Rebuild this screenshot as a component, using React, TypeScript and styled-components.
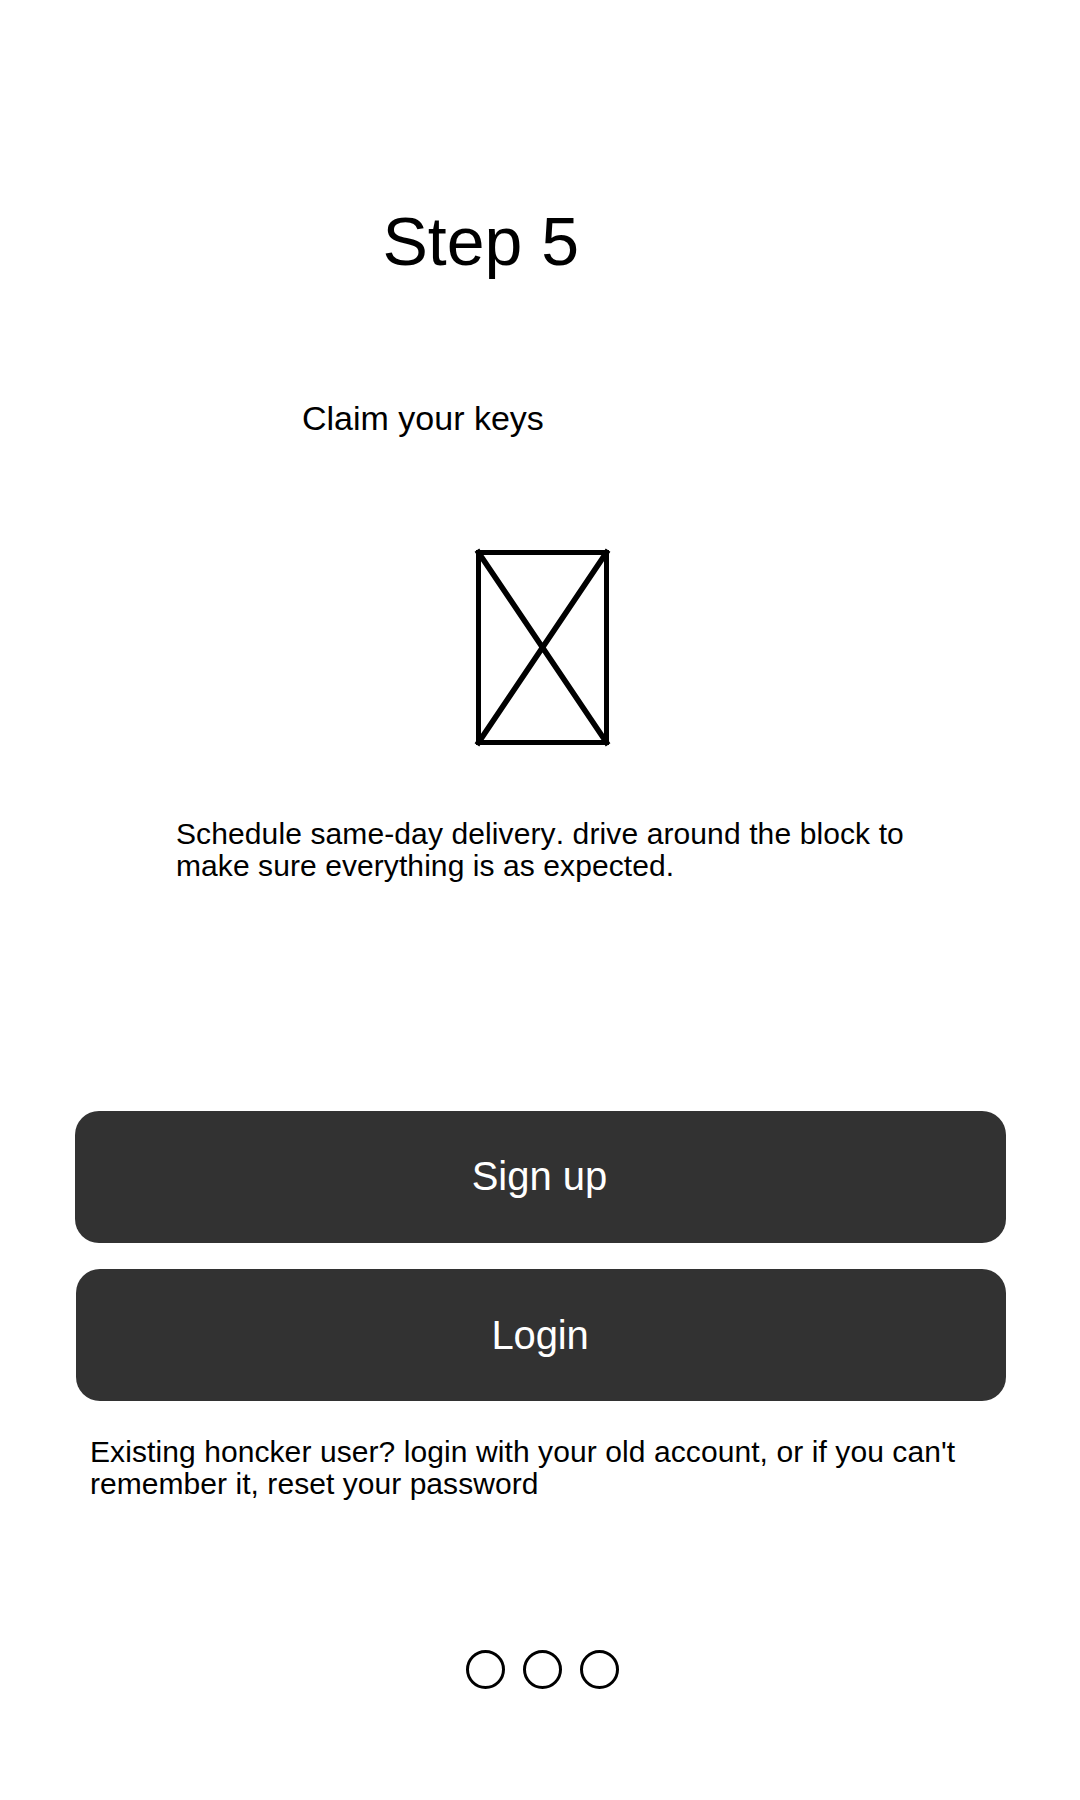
import React from "react";
import styled, { createGlobalStyle } from "styled-components";

const GlobalStyle = createGlobalStyle`
  body {
    margin: 0;
    background: #ffffff;
    color: #000000;
    font-family: "Liberation Sans", Arial, Helvetica, sans-serif;
    font-kerning: none;
  }
`;

const Screen = styled.main`
  box-sizing: border-box;
  display: flex;
  flex-direction: column;
  width: 1080px;
  height: 1800px;
  padding-top: 202px;
  overflow: hidden;
`;

const Title = styled.h1`
  margin: 0 0 0 382.5px;
  font-size: 68px;
  font-weight: 400;
  line-height: 78px;
`;

const Subtitle = styled.h2`
  margin: 119px 0 0 302px;
  font-size: 34px;
  font-weight: 400;
  line-height: 38px;
`;

const Placeholder = styled.svg`
  flex: none;
  width: 139px;
  height: 201px;
  margin: 110px 0 0 473px;
`;

const Copy = styled.p<{ $top: number; $left: number }>`
  margin: ${(p) => p.$top}px 0 0 ${(p) => p.$left}px;
  font-size: 30px;
  line-height: 32px;
  white-space: nowrap;
`;

const Line = styled.span<{ $spacing: number }>`
  display: block;
  letter-spacing: ${(p) => p.$spacing}px;
`;

const Actions = styled.div`
  display: flex;
  flex-direction: column;
  align-items: flex-end;
  gap: 26px;
  margin: 229px 74px 0 75px;
`;

const Button = styled.button<{ $width: number; $lift?: number; $spacing?: number }>`
  width: ${(p) => p.$width}px;
  height: 132px;
  padding: 0 2px ${(p) => p.$lift ?? 0}px 0;
  border: 0;
  border-radius: 24px;
  background: #323232;
  color: #ffffff;
  font: 400 40px/46px "Liberation Sans", Arial, Helvetica, sans-serif;
  letter-spacing: ${(p) => p.$spacing ?? 0}px;
`;

const Pager = styled.nav`
  display: flex;
  gap: 18px;
  margin: 150px 0 0 466px;
`;

const Dot = styled.span`
  box-sizing: border-box;
  width: 39px;
  height: 39px;
  border: 3px solid #000000;
  border-radius: 50%;
`;

export default function App() {
  return (
    <>
      <GlobalStyle />
      <Screen>
        <Title>Step 5</Title>
        <Subtitle>Claim your keys</Subtitle>
        <Placeholder viewBox="0 0 139 201" fill="none" stroke="#000" strokeWidth="5">
          <rect x="5.5" y="5.5" width="128" height="190" />
          <path d="M5.5 5.5 133.5 195.5M133.5 5.5 5.5 195.5" strokeWidth="5.6" strokeLinecap="square" />
        </Placeholder>
        <Copy $top={70} $left={176}>
          <Line $spacing={0.11}>Schedule same-day delivery. drive around the block to</Line>
          <Line $spacing={0.08}>make sure everything is as expected.</Line>
        </Copy>
        <Actions>
          <Button $width={931} $lift={2}>Sign up</Button>
          <Button $width={930} $spacing={-0.2}>Login</Button>
        </Actions>
        <Copy $top={35} $left={90}>
          <Line $spacing={0.085}>Existing honcker user? login with your old account, or if you can't</Line>
          <Line $spacing={0.05}>remember it, reset your password</Line>
        </Copy>
        <Pager>
          <Dot />
          <Dot />
          <Dot />
        </Pager>
      </Screen>
    </>
  );
}
